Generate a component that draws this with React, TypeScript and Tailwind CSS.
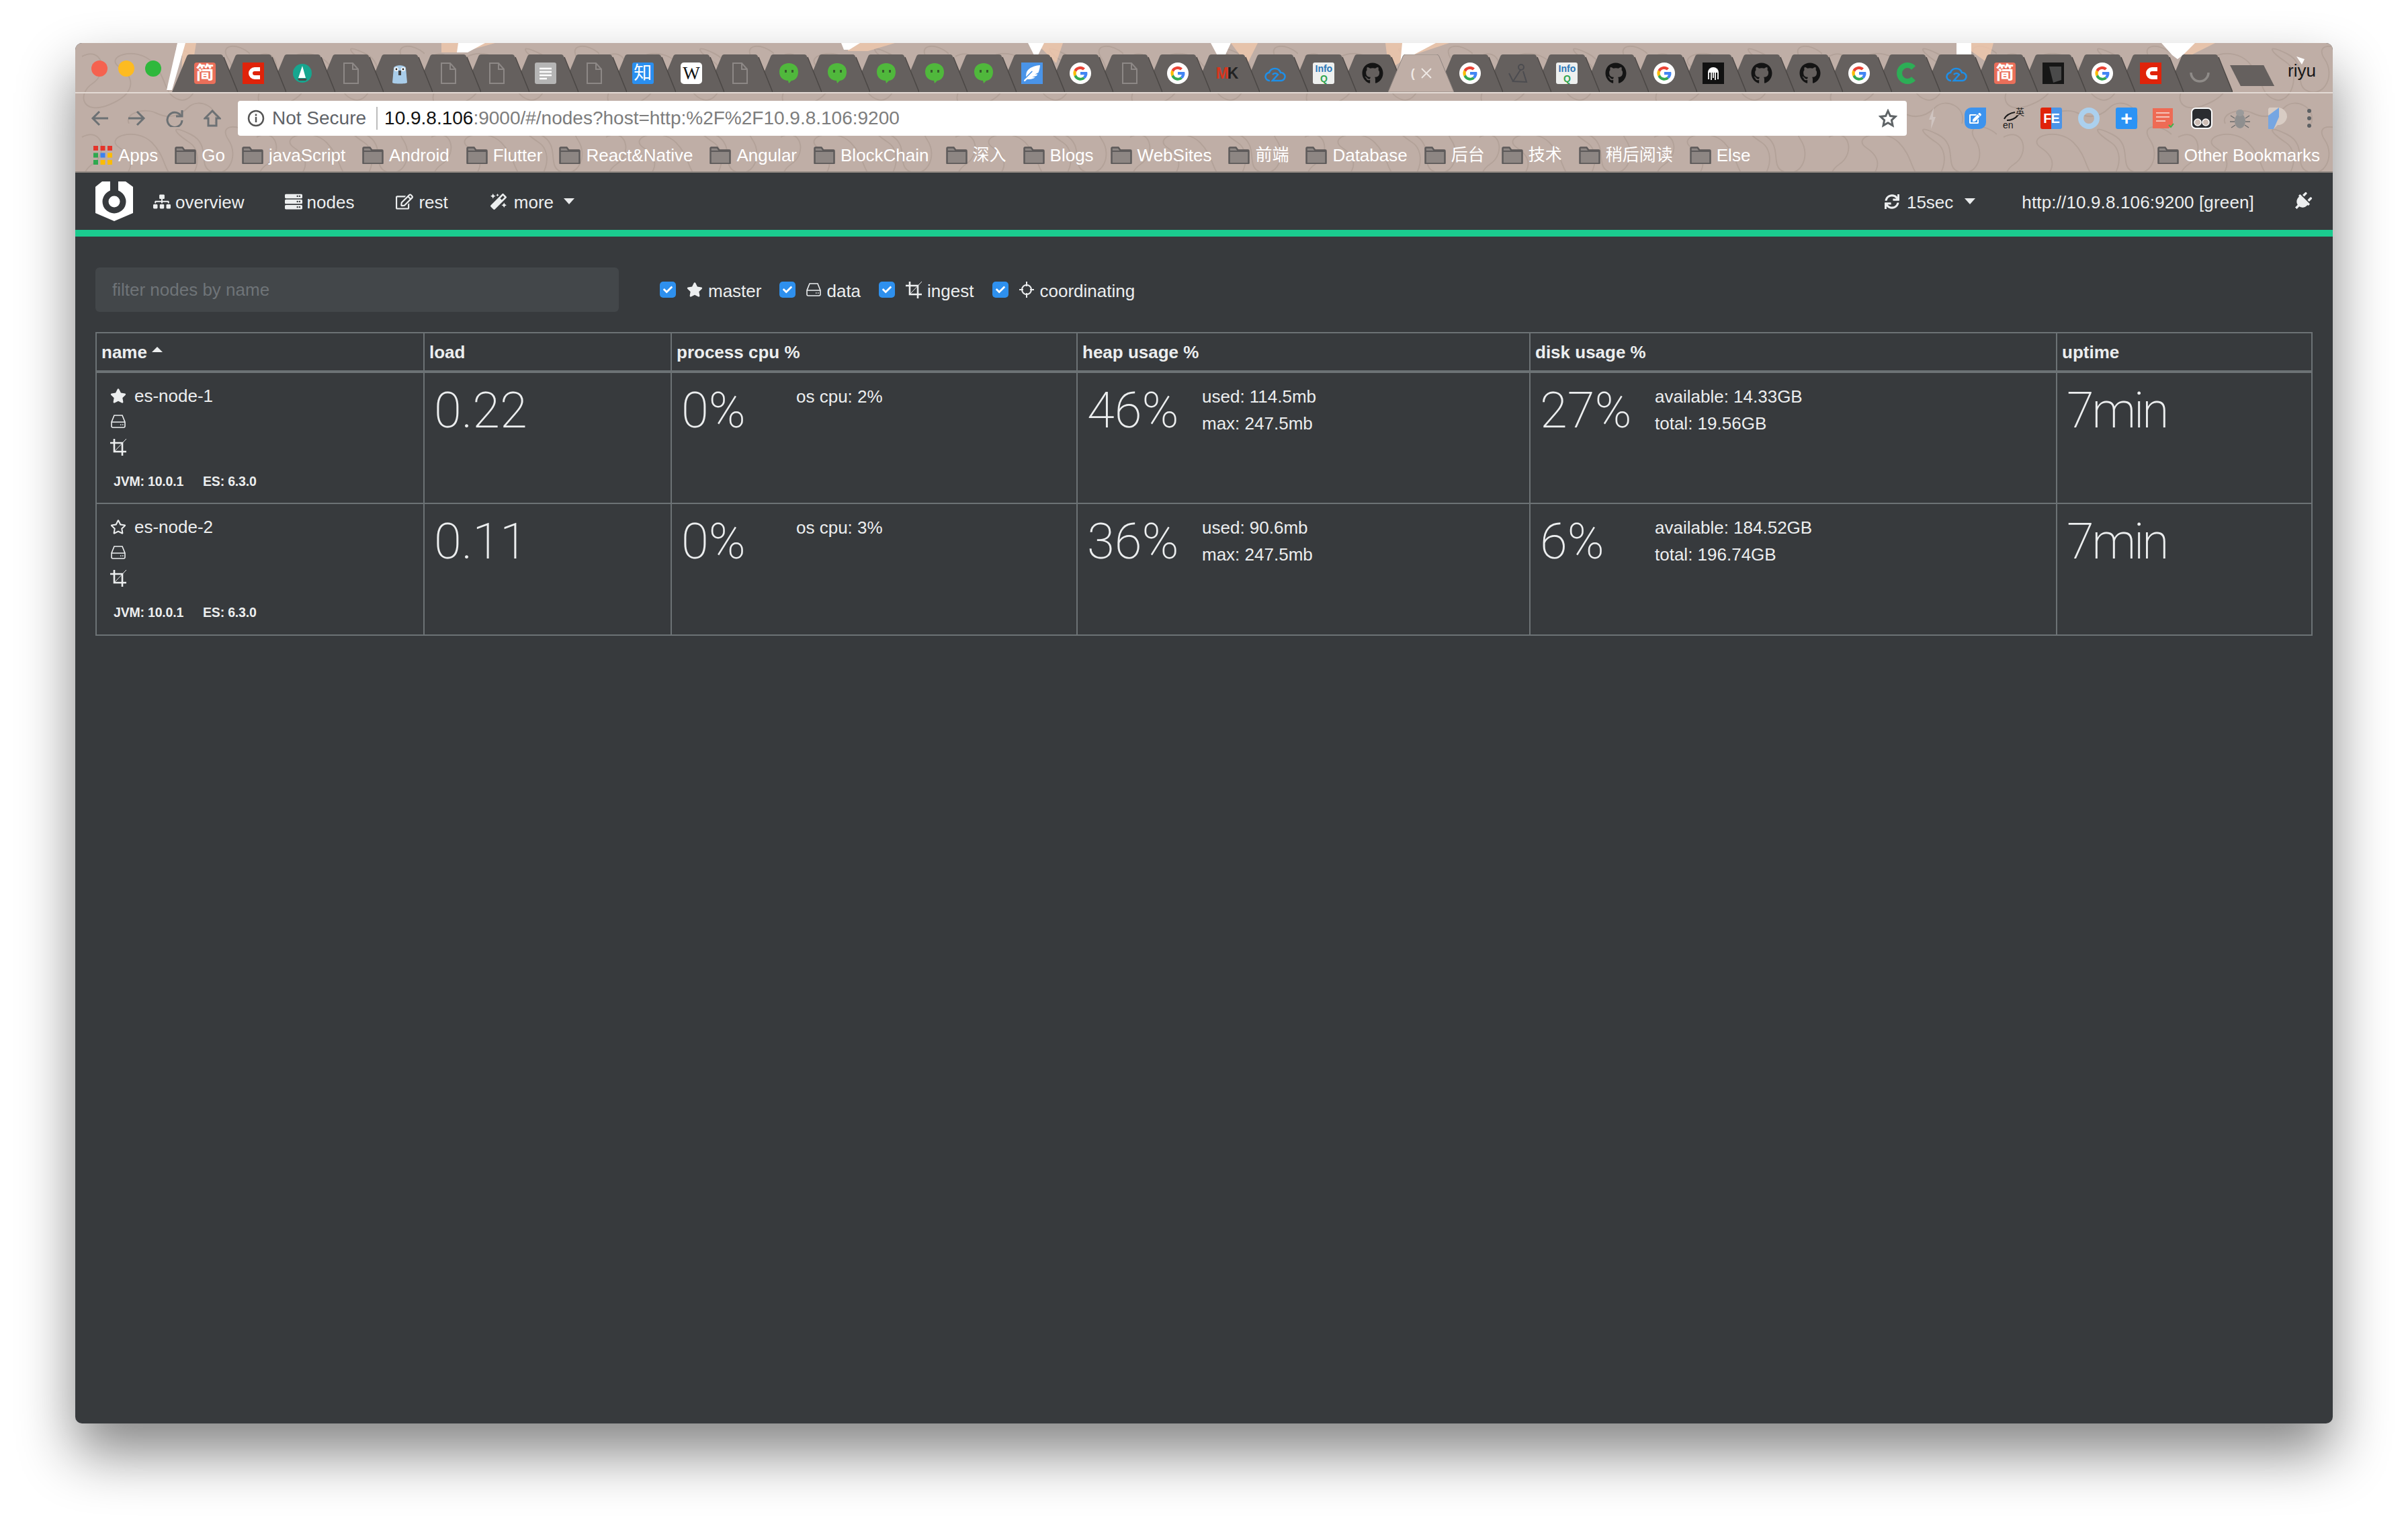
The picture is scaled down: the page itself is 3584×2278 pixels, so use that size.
import React from "react";
import {
  FaCheck, FaEdit, FaGithub, FaMagic, FaPlug, FaRegEdit, FaRegStar,
  FaServer, FaSitemap, FaStar, FaSync, FaFeatherAlt,
} from "react-icons/fa";

const Google = () => (
  <svg viewBox="0 0 32 32" className="w-8 h-8">
    <circle cx="16" cy="16" r="16" fill="#fff" />
    <path d="M16 10a6 6 0 0 1 4 1.6l3-3A10.5 10.5 0 0 0 6.6 11.300l3.400 2.700A6.300 6.300 0 0 1 16 10z" fill="#ea4335" />
    <path d="M6.600 11.300a10.500 10.500 0 0 0 0 9.400l3.400-2.700a6.300 6.300 0 0 1 0-4z" fill="#fbbc05" />
    <path d="M6.600 20.700A10.500 10.500 0 0 0 23 24l-3.200-2.500A6.300 6.300 0 0 1 10 18z" fill="#34a853" />
    <path d="M26.200 14H16v4.200h5.900a5 5 0 0 1-2.100 3.300L23 24a10.500 10.500 0 0 0 3.200-10z" fill="#4285f4" />
  </svg>
);

const Doc = () => (
  <svg viewBox="0 0 32 32" className="w-8 h-8" fill="none" stroke="#8d8886" strokeWidth="2">
    <path d="M6 1h13l8 9v21H6z" />
    <path d="M19 1v9h8" />
  </svg>
);

const Wechat = () => (
  <svg viewBox="0 0 32 32" className="w-8 h-8">
    <path d="M16 1c8 0 14 5 14 13s-5 13-10 13l-4 4-1-4c-7 0-13-5-13-13S8 1 16 1z" fill="#50b83c" />
    <rect x="10" y="11" width="3" height="4" fill="#365c2c" />
    <rect x="20" y="11" width="3" height="4" fill="#365c2c" />
  </svg>
);

const Cloud = () => (
  <svg viewBox="0 0 32 32" className="w-8 h-8" fill="none" stroke="#1e8fe8" strokeWidth="2.600">
    <path d="M8 27a6 6 0 0 1-1-12 9 9 0 0 1 17 0 6 6 0 0 1 1 12H12l8-9a5 5 0 0 0-8 0" />
  </svg>
);

const Square = ({ bg, text, className }: { bg: string; text: string; className: string }) => (
  <div className={`w-8 h-8 flex items-center justify-center leading-none ${bg} ${className}`}>{text}</div>
);

const RedC = () => (
  <svg viewBox="0 0 32 32" className="w-8 h-8">
    <rect width="32" height="32" fill="#e0230a" />
    <path d="M26 10h-8a6 6 0 0 0 0 12h8" fill="none" stroke="#fff" strokeWidth="6" />
  </svg>
);

const Jian = () => <Square bg="bg-[#ea6f5a] rounded-[4px]" text="简" className="text-white text-[27px] font-bold" />;

const InfoQ = () => (
  <div className="w-8 h-8 rounded-[3px] bg-[#eef0ef] flex flex-col items-center justify-center leading-none font-bold">
    <span className="text-[14px] leading-[15px] text-[#2b77b8]">Info</span>
    <span className="text-[14px] leading-[14px] text-[#2da44e]">Q</span>
  </div>
);

const Github = () => <FaGithub className="w-8 h-8 text-[#141414]" />;

const favicons: Record<string, React.ReactNode> = {
  jian: <Jian />,
  c: <RedC />,
  boat: (
    <svg viewBox="0 0 32 32" className="w-8 h-8">
      <circle cx="16" cy="16" r="14" fill="#17a68f" />
      <path d="M16 5l5 18H10z" fill="#fff" />
      <path d="M9 24h14l-2 3H11z" fill="#4a4a4a" />
    </svg>
  ),
  doc: <Doc />,
  gopher: (
    <svg viewBox="0 0 32 32" className="w-8 h-8">
      <path d="M7 8c2-5 16-5 18 0l2 22c-2 2-20 2-22 0z" fill="#a9cdea" />
      <circle cx="11" cy="10" r="3" fill="#fff" />
      <circle cx="21" cy="10" r="3" fill="#fff" />
      <circle cx="11" cy="10" r="1.400" fill="#222" />
      <circle cx="21" cy="10" r="1.400" fill="#222" />
      <rect x="14" y="12" width="4" height="7" fill="#444" />
    </svg>
  ),
  lines: (
    <svg viewBox="0 0 32 32" className="w-8 h-8">
      <rect width="32" height="32" rx="3" fill="#b5b5b5" />
      <path d="M7 9h18M7 14h18M7 19h18M7 24h11" stroke="#fff" strokeWidth="2.500" />
    </svg>
  ),
  zhi: <Square bg="bg-[#2a8ff0] rounded-[3px]" text="知" className="text-white text-[27px]" />,
  w: (
    <div className="w-8 h-8 rounded-[5px] bg-white flex items-center justify-center text-[#111] text-[27px] leading-none [font-family:'Liberation_Serif',serif]">
      W
    </div>
  ),
  wechat: <Wechat />,
  feather: (
    <div className="w-8 h-8 bg-[#4a94e8] flex items-center justify-center">
      <FaFeatherAlt className="w-6 h-6 text-white" />
    </div>
  ),
  g: <Google />,
  mk: (
    <div className="w-8 h-8 flex items-center justify-center text-[23px] font-bold tracking-[-2px] leading-none">
      <span className="text-[#d9351c]">M</span>
      <span className="text-[#222]">K</span>
    </div>
  ),
  cloud: <Cloud />,
  infoq: <InfoQ />,
  github: <Github />,
  active: (
    <div className="flex items-center gap-[9px] text-[#efe9e5] leading-none">
      <span className="text-[18px] font-bold">(</span>
      <svg viewBox="0 0 16 16" className="w-[16px] h-[16px]" stroke="#efe9e5" strokeWidth="1.800">
        <path d="M1 1l14 14M15 1L1 15" />
      </svg>
    </div>
  ),
  sign: (
    <svg viewBox="0 0 32 32" className="w-8 h-8" fill="none" stroke="#4c4c50" strokeWidth="2">
      <circle cx="20" cy="7" r="4" />
      <path d="M19 11L8 28l20 1-5-16M2 16l6 12" />
    </svg>
  ),
  jelly: (
    <svg viewBox="0 0 32 32" className="w-8 h-8">
      <rect width="32" height="32" fill="#111" />
      <path d="M8 15a8 8 0 0 1 16 0z" fill="#fff" />
      <path d="M9 15v10M13 15v11M16 15v8M19 15v11M23 15v10" stroke="#fff" strokeWidth="1.800" />
    </svg>
  ),
  greenc: (
    <svg viewBox="0 0 32 32" className="w-8 h-8">
      <path d="M25 8a12 12 0 1 0 0 16" fill="none" stroke="#2dae56" strokeWidth="8" />
    </svg>
  ),
  dark: (
    <svg viewBox="0 0 32 32" className="w-8 h-8">
      <rect width="32" height="32" fill="#161616" />
      <path d="M10 6h18v20l-12 4z" fill="#4a4a4a" />
    </svg>
  ),
  spin: (
    <svg viewBox="0 0 32 32" className="w-8 h-8" fill="none" stroke="#8f8b88" strokeWidth="3.500">
      <path d="M3 15a13 13 0 0 0 26 0" />
    </svg>
  ),
};

const tabs = [
  "jian", "c", "boat", "doc", "gopher", "doc", "doc", "lines", "doc", "zhi", "w", "doc", "wechat", "wechat", "wechat",
  "wechat", "wechat", "feather", "g", "doc", "g", "mk", "cloud", "infoq", "github", "active", "g", "sign", "infoq",
  "github", "g", "jelly", "github", "github", "g", "greenc", "cloud", "jian", "dark", "g", "c", "spin",
];

const bookmarks = [
  "Go", "javaScript", "Android", "Flutter", "React&Native", "Angular", "BlockChain", "深入", "Blogs", "WebSites", "前端",
  "Database", "后台", "技术", "稍后阅读", "Else",
];

const Folder = () => (
  <svg viewBox="0 0 32 26" className="w-8 h-[26px] shrink-0">
    <path d="M1.500 24.500V2.500a1 1 0 0 1 1-1h9l3 4h15a1 1 0 0 1 1 1v18a1 1 0 0 1-1 1h-27a1 1 0 0 1-1-1z" fill="#8d8683" stroke="#5d5a5a" strokeWidth="2.500" />
    <path d="M2 7h28" stroke="#5d5a5a" strokeWidth="2" />
  </svg>
);

const Tab = ({ kind, index }: { kind: string; index: number }) => {
  const active = kind === "active";
  return (
    <div
      className="relative w-[98px] h-[56px] shrink-0 -mr-[25.600px] flex items-center justify-center"
      style={{ zIndex: active ? 100 : 60 - index }}
    >
      <svg viewBox="0 0 98 56" className="absolute inset-0 w-full h-full">
        <path
          d="M0 56L22 3q1-3 4-3h46q3 0 4 3l22 53z"
          fill={active ? "#bfaea6" : "#65605e"}
          stroke={active ? "#8f8580" : "none"}
        />
        {!active && <path d="M77 4L98 56" stroke="#4b4745" strokeWidth="1.500" />}
      </svg>
      <div className="relative">{favicons[kind]}</div>
    </div>
  );
};

const Texture = () => (
  <svg className="absolute inset-0 w-full h-full">
    <defs>
      <pattern id="squiggle" width="260" height="120" patternUnits="userSpaceOnUse">
        <path
          d="M10 20c30-16 40 24 16 40s-16 48 24 32 40-40 16-56 24-32 48-8 16 48 40 56 40-40 16-56S140 0 172 16s8 48 32 56 40-24 24-48 16-24 32-8M80 120c-8-16 24-24 40-16s32 8 48-8 48 0 40 24"
          fill="none"
          stroke="#b3a299"
          strokeWidth="2"
        />
      </pattern>
    </defs>
    <rect width="100%" height="100%" fill="url(#squiggle)" />
  </svg>
);

// streaks of the browser theme, window coordinates
const Streaks = () => (
  <svg viewBox="0 0 3360 73" className="absolute left-0 top-0 w-[3360px] h-[73px]">
    <g fill="#f0c8ac" opacity="0.8">
      <path d="M160 0h20l-8 50h-14zM545 0h80l-50 14h-30zM1150 0h70l-40 12h-30zM1430 0h40l-10 30zM1720 0h40l-16 32zM1950 0h95l-60 20-30 20zM2805 0h50l-8 30zM3115 0h70l-40 20z" />
    </g>
    <g fill="#fff">
      <path d="M152 0h12l-20 70h-8zM570 0h40l-26 14h-16zM1140 0h28l-16 10h-8zM1418 0h24l-12 24zM1690 0h30l-14 30zM1975 0h50l-34 18-20 24zM2800 0h22v22h-22zM3105 0h50l-18 18-8 6-8-6zM3306 20l12 4-4 8z" />
    </g>
  </svg>
);

const ExtensionIcons = () => (
  <div className="flex items-center">
    <svg viewBox="0 0 12 32" className="w-[12px] h-[32px]">
      <path d="M8 0L1 18h4l-1 14 7-18H7z" fill="#cfc4c0" />
    </svg>
    <div className="w-8 h-8 ml-[42px] bg-[#3c93ee] rounded-[10px] rounded-tr-none flex items-center justify-center">
      <FaEdit className="w-[18px] h-[18px] text-white" />
    </div>
    <div className="relative w-8 h-8 ml-[25px] text-[#1a1a1a] leading-none">
      <span className="absolute right-0 top-0 text-[13px]">英</span>
      <svg viewBox="0 0 32 16" className="absolute left-0 top-[4px] w-8 h-4" fill="none" stroke="#1a1a1a" strokeWidth="2">
        <path d="M2 13q4-8 16-10M6 15q10 0 16-7" />
      </svg>
      <span className="absolute left-0 bottom-0 text-[14px] leading-[12px]">en</span>
    </div>
    <div className="w-8 h-8 ml-[24px] rounded-[3px] bg-[linear-gradient(90deg,#e0230a_50%,#4a94e8_50%)] flex items-center justify-center text-white font-bold text-[20px] leading-none tracking-[-1px]">
      FE
    </div>
    <svg viewBox="0 0 32 32" className="w-8 h-8 ml-[24px]">
      <circle cx="16" cy="16" r="12" fill="none" stroke="#abd0ee" strokeWidth="8" />
    </svg>
    <div className="w-8 h-8 ml-[24px] rounded-[3px] bg-[#2b93f5] flex items-center justify-center text-white text-[30px] font-bold leading-none">
      +
    </div>
    <svg viewBox="0 0 32 32" className="w-8 h-8 ml-[23px]">
      <path d="M0 1h30v24l-6 6H0z" fill="#ee6b55" />
      <path d="M5 8h20M5 14h20M5 20h14" stroke="#f4c3b8" strokeWidth="2" />
      <path d="M24 26l3 3 4-5" stroke="#3bb44a" strokeWidth="2" fill="none" />
    </svg>
    <svg viewBox="0 0 32 32" className="w-8 h-8 ml-[25px]">
      <rect x="1" y="1" width="30" height="30" rx="6" fill="#2a2c30" stroke="#fff" strokeWidth="2" />
      <circle cx="10" cy="22" r="5" fill="#cdbdb5" stroke="#fff" strokeWidth="1.500" />
      <circle cx="22" cy="22" r="5" fill="#cdbdb5" stroke="#fff" strokeWidth="1.500" />
    </svg>
    <svg viewBox="0 0 30 32" className="w-[30px] h-8 ml-[26px]">
      <ellipse cx="15" cy="20" rx="8" ry="11" fill="#8f8f8f" />
      <ellipse cx="15" cy="8" rx="6" ry="5" fill="#9a9a9a" />
      <path d="M1 12l6 4M29 12l-6 4M0 21h7M30 21h-7M2 30l6-4M28 30l-6-4" stroke="#6e6e6e" strokeWidth="1.500" />
    </svg>
    <svg viewBox="0 0 28 32" className="w-[28px] h-8 ml-[27px]">
      <path d="M2 0h12a14 14 0 0 1 14 14 14 14 0 0 1-14 12l-6 6H0V2z" fill="#d8ccc4" />
      <path d="M0 12L16 0v14l-8 18H0z" fill="#76a6e2" />
    </svg>
    <div className="ml-[30px] flex flex-col gap-[5px]">
      <span className="block w-[6px] h-[6px] rounded-full bg-[#5d6063]" />
      <span className="block w-[6px] h-[6px] rounded-full bg-[#5d6063]" />
      <span className="block w-[6px] h-[6px] rounded-full bg-[#5d6063]" />
    </div>
  </div>
);

const BrowserChrome = () => (
  <div className="relative h-[193px] bg-[#bfaea6] border-b-2 border-[#8e8681] overflow-hidden">
    <Texture />
    <Streaks />
    <div className="relative flex flex-col">
      {/* tab strip */}
      <div className="flex items-end h-[75px] border-b-2 border-[#e3dad4]">
        <div className="flex items-center gap-[16px] pl-[24px] w-[144px] shrink-0 self-start pt-[26px]">
          <span className="w-[24px] h-[24px] rounded-full bg-[#f5624f]" />
          <span className="w-[24px] h-[24px] rounded-full bg-[#fdbb21]" />
          <span className="w-[24px] h-[24px] rounded-full bg-[#2fb83c]" />
        </div>
        <div className="flex items-end">
          {tabs.map((kind, i) => (
            <Tab key={i} kind={kind} index={i} />
          ))}
        </div>
        <div className="shrink-0 w-[66px] h-[31px] ml-[22px] mb-[9px] bg-[#65605e] [clip-path:polygon(0_0,76%_0,100%_100%,24%_100%)]" />
        <span className="ml-[20px] mb-[19px] text-[26px] text-[#161616] leading-none">riyu</span>
      </div>
      {/* toolbar */}
      <div className="flex items-center h-[73px] pl-[23px] pr-[34px]">
        <div className="flex items-center gap-[30px] text-[#6c7174] shrink-0">
          <svg viewBox="0 0 26 26" className="w-[26px] h-[26px]" fill="none" stroke="currentColor" strokeWidth="3">
            <path d="M26 13H3M13 3L3 13l10 10" />
          </svg>
          <svg viewBox="0 0 26 26" className="w-[26px] h-[26px]" fill="none" stroke="currentColor" strokeWidth="3">
            <path d="M0 13h23M13 3l10 10-10 10" />
          </svg>
          <svg viewBox="0 0 26 26" className="w-[26px] h-[26px]" fill="none" stroke="currentColor" strokeWidth="3">
            <path d="M22 9a11 11 0 1 0 2 7" />
            <path d="M24 1v9h-9" />
          </svg>
          <svg viewBox="0 0 26 26" className="w-[26px] h-[26px]" fill="none" stroke="currentColor" strokeWidth="3">
            <path d="M13 2L2 13h5v11h12V13h5z" />
          </svg>
        </div>
        <div className="ml-[25px] w-[2484px] shrink-0 h-[52px] bg-white rounded-[4px] flex items-center pl-[14px] pr-[14px] text-[28px] leading-none">
          <svg viewBox="0 0 26 26" className="w-[26px] h-[26px] shrink-0" fill="none" stroke="#555" strokeWidth="2.500">
            <circle cx="13" cy="13" r="11" />
            <path d="M13 11v8M13 6.500v3" />
          </svg>
          <span className="ml-[11px] text-[#5f6368]">Not Secure</span>
          <span className="ml-[15px] w-[2px] h-[34px] bg-[#bdbdbd]" />
          <span className="ml-[10px] text-[#111]">10.9.8.106</span>
          <span className="text-[#7d7d7d]">:9000/#/nodes?host=http:%2F%2F10.9.8.106:9200</span>
          <span className="ml-auto">
            <svg viewBox="0 0 28 28" className="w-[28px] h-[28px]" fill="none" stroke="#5e6366" strokeWidth="3">
              <path d="M14 3l3.400 7.500 7.800.900-5.800 5.400 1.600 8L14 20.800 7 24.800l1.600-8-5.800-5.400 7.800-.900z" />
            </svg>
          </span>
        </div>
        <div className="ml-[32px] shrink-0">
          <ExtensionIcons />
        </div>
      </div>
      {/* bookmarks */}
      <div className="flex items-center h-[37px] pl-[27px] pr-[19px] text-[26px] text-white leading-none">
        <svg viewBox="0 0 28 28" className="w-[28px] h-[28px] shrink-0">
          {[0, 1, 2].map((row) =>
            [0, 1, 2].map((col) => (
              <rect
                key={`${row}-${col}`}
                x={col * 10.500}
                y={row * 10.500}
                width="7"
                height="7"
                fill={[["#e4352b", "#e4352b", "#e4352b"], ["#2fa84f", "#3b82f0", "#fbbc05"], ["#2fa84f", "#fbbc05", "#fbbc05"]][row][col]}
              />
            ))
          )}
        </svg>
        <span className="ml-[9px]">Apps</span>
        {bookmarks.map((b) => (
          <div key={b} className="flex items-center gap-[8px] ml-[25px]">
            <Folder />
            <span className={/[^\x00-\x7f]/.test(b) ? "text-[25px]" : ""}>{b}</span>
          </div>
        ))}
        <div className="flex items-center gap-[8px] ml-auto">
          <Folder />
          <span>Other Bookmarks</span>
        </div>
      </div>
    </div>
  </div>
);

const Caret = () => <span className="w-0 h-0 border-x-[8px] border-x-transparent border-t-[9px] border-t-[#e9ebec]" />;

const NavBar = () => (
  <div className="flex items-center h-[85px] pl-[30px] pr-[31px] text-[26px] text-[#eceeef] leading-none">
    <svg viewBox="0 0 56 59" className="w-[56px] h-[59px] shrink-0">
      <path d="M10 0L0 8v39l28 12 28-12V8L45 0z" fill="#fff" />
      <rect x="22" y="0" width="12" height="20" fill="#373a3d" />
      <circle cx="28" cy="30" r="13" fill="#fff" stroke="#373a3d" strokeWidth="9" />
    </svg>
    <FaSitemap className="w-[26px] h-[26px] ml-[30px]" />
    <span className="ml-[7px] pt-[2px]">overview</span>
    <FaServer className="w-[26px] h-[26px] ml-[60px]" />
    <span className="ml-[7px] pt-[2px]">nodes</span>
    <FaRegEdit className="w-[26px] h-[26px] ml-[62px]" />
    <span className="ml-[8px] pt-[2px]">rest</span>
    <FaMagic className="w-[24px] h-[24px] ml-[63px]" />
    <span className="ml-[11px] pt-[2px]">more</span>
    <span className="ml-[15px] flex">
      <Caret />
    </span>
    <FaSync className="w-[22px] h-[22px] ml-auto" />
    <span className="ml-[11px] pt-[2px]">15sec</span>
    <span className="ml-[17px] flex">
      <Caret />
    </span>
    <span className="ml-[69px] pt-[2px] tracking-[0.150px]">http://10.9.8.106:9200 [green]</span>
    <FaPlug className="w-[28px] h-[28px] ml-[58px] rotate-45" />
  </div>
);

// outlined drive, cropped frame and target marks are thin in the reference, so drawn here
const HddIcon = () => (
  <svg viewBox="0 0 22 20" className="w-[22px] h-[20px]" fill="none" stroke="currentColor" strokeWidth="1.600">
    <path d="M5 1h12l4 10v6a2 2 0 0 1-2 2H3a2 2 0 0 1-2-2v-6z" />
    <path d="M1 11h20M14 15h1.500M17 15h1.500" />
  </svg>
);

const CropIcon = () => (
  <svg viewBox="0 0 24 25" className="w-[24px] h-[25px]" fill="none" stroke="currentColor" strokeWidth="2.600">
    <path d="M6 0v19h18M0 6h18v19" />
    <path d="M6 19L24 0" strokeWidth="1" />
  </svg>
);

const TargetIcon = () => (
  <svg viewBox="0 0 22 26" className="w-[22px] h-[26px]" fill="none" stroke="currentColor" strokeWidth="2">
    <circle cx="11" cy="13" r="7" />
    <path d="M11 1v7M11 18v7M0 13h6M16 13h6" />
  </svg>
);

const CheckFilter = ({ icon, label, className }: { icon: React.ReactNode; label: string; className: string }) => (
  <div className={`flex items-center ${className}`}>
    <span className="w-[24px] h-[24px] rounded-[5px] bg-[#2e90ee] flex items-center justify-center">
      <FaCheck className="w-[14px] h-[14px] text-white" />
    </span>
    <span className="ml-[16px] flex justify-center">{icon}</span>
    <span className="ml-[8px] pt-[3px]">{label}</span>
  </div>
);

type Node = {
  name: string;
  master: boolean;
  load: string;
  cpu: string;
  osCpu: string;
  heap: string;
  heapUsed: string;
  disk: string;
  available: string;
  total: string;
};

const nodes: Node[] = [
  { name: "es-node-1", master: true, load: "0.22", cpu: "0%", osCpu: "os cpu: 2%", heap: "46%", heapUsed: "used: 114.5mb", disk: "27%", available: "available: 14.33GB", total: "total: 19.56GB" },
  { name: "es-node-2", master: false, load: "0.11", cpu: "0%", osCpu: "os cpu: 3%", heap: "36%", heapUsed: "used: 90.6mb", disk: "6%", available: "available: 184.52GB", total: "total: 196.74GB" },
];

const Big = ({ children, className = "" }: { children: React.ReactNode; className?: string }) => (
  <span className={`block text-[74px] leading-[72px] [font-family:Roboto,sans-serif] font-extralight mt-[5px] ${className}`}>
    {children}
  </span>
);

const Metric = ({ big, lines }: { big: string; lines: string[] }) => (
  <div className="flex">
    <div className="w-[185px] shrink-0 pl-[14px]">
      <Big>{big}</Big>
    </div>
    <div className="leading-[40px]">
      {lines.map((l) => (
        <div key={l}>{l}</div>
      ))}
    </div>
  </div>
);

const thClass = "border-2 border-b-4 border-[#6c7275] h-[58px] px-[7px] text-left font-bold align-middle";
const tdClass = "border-2 border-[#6c7275] h-[196px] align-top pt-[15px]";

const NodesTable = () => (
  <table className="mt-[30px] w-[3298px] table-fixed border-collapse leading-none">
    <colgroup>
      <col className="w-[488px]" />
      <col className="w-[368px]" />
      <col className="w-[604px]" />
      <col className="w-[674px]" />
      <col className="w-[784px]" />
      <col className="w-[380px]" />
    </colgroup>
    <thead>
      <tr>
        <th className={thClass}>
          <span className="flex items-center">
            name
            <span className="ml-[7px] mb-[8px] w-0 h-0 border-x-[8px] border-x-transparent border-b-[8px] border-b-[#eceeef]" />
          </span>
        </th>
        <th className={thClass}>load</th>
        <th className={thClass}>process cpu %</th>
        <th className={thClass}>heap usage %</th>
        <th className={thClass}>disk usage %</th>
        <th className={thClass}>uptime</th>
      </tr>
    </thead>
    <tbody>
      {nodes.map((n) => (
        <tr key={n.name}>
          <td className={`${tdClass} pl-[20px]`}>
            <div className="flex items-center h-[38px]">
              {n.master ? <FaStar className="w-[24px] h-[24px]" /> : <FaRegStar className="w-[24px] h-[24px]" />}
              <span className="ml-[12px]">{n.name}</span>
            </div>
            <div className="flex items-center h-[38px] pl-[1px]">
              <HddIcon />
            </div>
            <div className="flex items-center h-[38px]">
              <CropIcon />
            </div>
            <div className="flex gap-[29px] mt-[21px] ml-[5px] text-[19.500px] font-bold leading-[22px] tracking-[-0.200px]">
              <span>JVM: 10.0.1</span>
              <span>ES: 6.3.0</span>
            </div>
          </td>
          <td className={`${tdClass} pl-[14px]`}>
            <Big>{n.load}</Big>
          </td>
          <td className={tdClass}>
            <Metric big={n.cpu} lines={[n.osCpu]} />
          </td>
          <td className={tdClass}>
            <Metric big={n.heap} lines={[n.heapUsed, "max: 247.5mb"]} />
          </td>
          <td className={tdClass}>
            <Metric big={n.disk} lines={[n.available, n.total]} />
          </td>
          <td className={`${tdClass} pl-[14px]`}>
            <Big className="tracking-[-3.500px]">7min</Big>
          </td>
        </tr>
      ))}
    </tbody>
  </table>
);

export default function App() {
  return (
    <div className="min-h-screen bg-white pt-[64px] pl-[112px] [font-family:'Liberation_Sans','Noto_Sans_CJK_SC',sans-serif]">
      <div className="w-[3360px] h-[2054px] rounded-[10px] overflow-hidden bg-[#373a3d] shadow-[0_44px_84px_rgba(0,0,0,0.48)] flex flex-col">
        <BrowserChrome />
        <NavBar />
        <div className="h-[10px] bg-[#1bcb8f]" />
        <div className="flex-1 px-[30px] pt-[46px] text-[26px] text-[#eceeef]">
          <div className="flex items-center leading-none">
            <input
              placeholder="filter nodes by name"
              className="w-[779px] h-[66px] rounded-[6px] bg-[#43474a] px-[25px] text-[26px] placeholder:text-[#6f7478] outline-none"
            />
            <CheckFilter
              className="ml-[61px]"
              icon={<FaStar className="w-[24px] h-[24px]" />}
              label="master"
            />
            <CheckFilter className="ml-[27px]" icon={<HddIcon />} label="data" />
            <CheckFilter className="ml-[27px]" icon={<CropIcon />} label="ingest" />
            <CheckFilter className="ml-[28px]" icon={<TargetIcon />} label="coordinating" />
          </div>
          <NodesTable />
        </div>
      </div>
    </div>
  );
}
